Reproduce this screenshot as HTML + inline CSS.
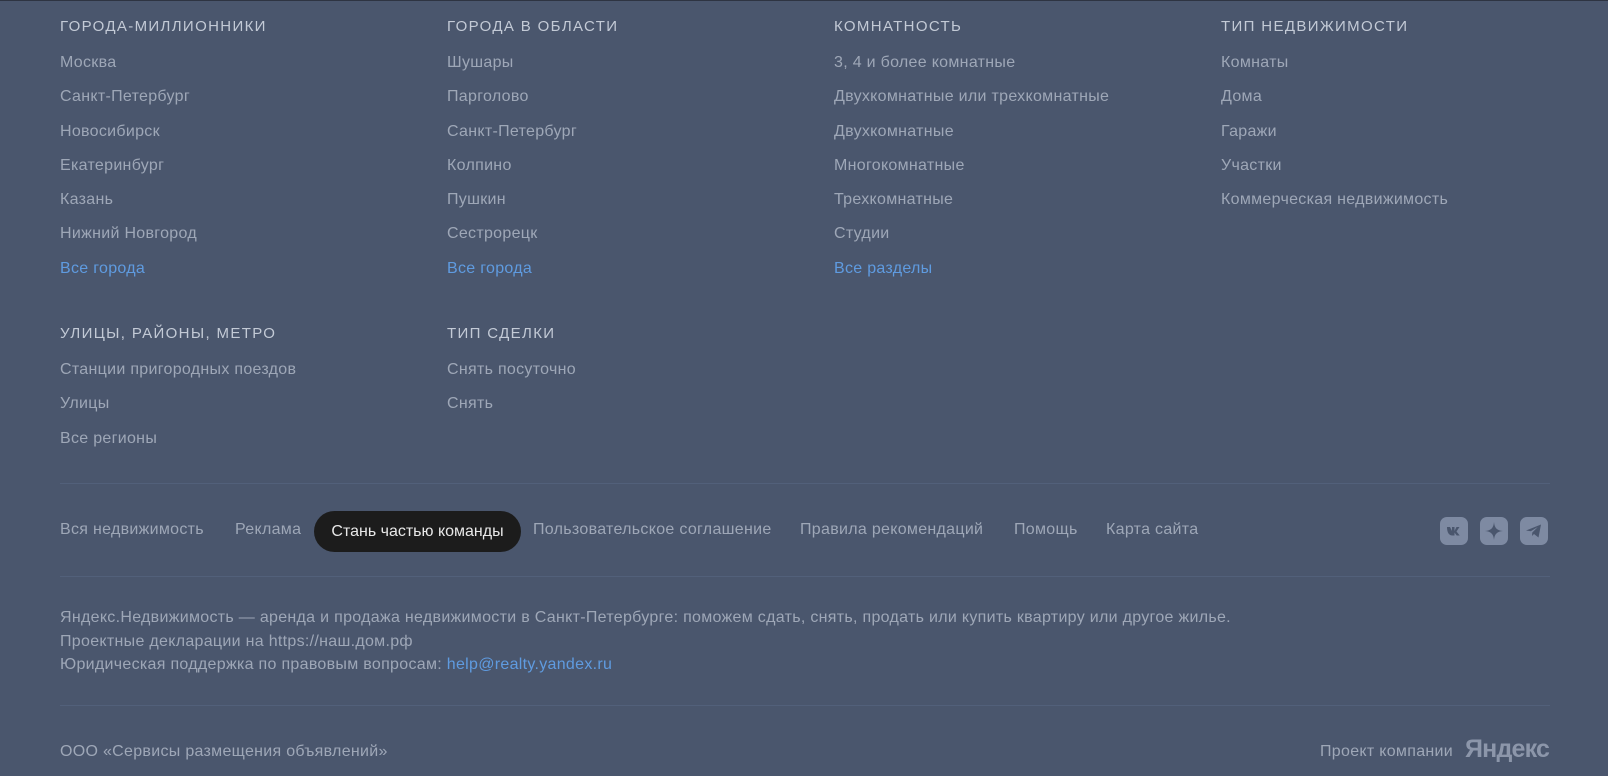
<!DOCTYPE html>
<html><head><meta charset="utf-8"><style>
body{margin:0;width:1608px;height:776px;background:#4a566d;font-family:"Liberation Sans",sans-serif;color:#9ea7b7;border-top:1px solid #2e3442;box-sizing:border-box;overflow:hidden;position:relative}
.a{position:absolute;white-space:nowrap}
.h{font-size:15px;letter-spacing:1.35px;color:#c3cad6;text-transform:uppercase}
.l{font-size:16px;letter-spacing:0.3px}
.b{color:#5f9be0}
.sep{position:absolute;left:60px;width:1490px;height:1px;background:#52607a}
.ic{position:absolute;top:516px;width:28px;height:28px;border-radius:7px;background:#7e8aa2}
</style></head><body>
<div class="a h" style="left:60px;top:17px">Города-миллионники</div>
<div class="a h" style="left:447px;top:17px">Города в области</div>
<div class="a h" style="left:834px;top:17px">Комнатность</div>
<div class="a h" style="left:1221px;top:17px">Тип недвижимости</div>
<div class="a l" style="left:60px;top:45px;line-height:34.3px">Москва<br>Санкт-Петербург<br>Новосибирск<br>Екатеринбург<br>Казань<br>Нижний Новгород<br><span class="b">Все города</span></div>
<div class="a l" style="left:447px;top:45px;line-height:34.3px">Шушары<br>Парголово<br>Санкт-Петербург<br>Колпино<br>Пушкин<br>Сестрорецк<br><span class="b">Все города</span></div>
<div class="a l" style="left:834px;top:45px;line-height:34.3px">3, 4 и более комнатные<br>Двухкомнатные или трехкомнатные<br>Двухкомнатные<br>Многокомнатные<br>Трехкомнатные<br>Студии<br><span class="b">Все разделы</span></div>
<div class="a l" style="left:1221px;top:45px;line-height:34.3px">Комнаты<br>Дома<br>Гаражи<br>Участки<br>Коммерческая недвижимость</div>
<div class="a h" style="left:60px;top:324px">Улицы, районы, метро</div>
<div class="a h" style="left:447px;top:324px">Тип сделки</div>
<div class="a l" style="left:60px;top:352px;line-height:34.3px">Станции пригородных поездов<br>Улицы<br>Все регионы</div>
<div class="a l" style="left:447px;top:352px;line-height:34.3px">Снять посуточно<br>Снять</div>
<div class="sep" style="top:482px"></div>
<div class="a l" style="left:60px;top:520px">Вся недвижимость</div>
<div class="a l" style="left:235px;top:520px">Реклама</div>
<div class="a l" style="left:314px;top:510px;width:207px;height:41px;border-radius:21px;background:#1c1c1c;color:#e8e8e8;line-height:41px;text-align:center;letter-spacing:0">Стань частью команды</div>
<div class="a l" style="left:533px;top:520px">Пользовательское соглашение</div>
<div class="a l" style="left:800px;top:520px">Правила рекомендаций</div>
<div class="a l" style="left:1014px;top:520px">Помощь</div>
<div class="a l" style="left:1106px;top:520px">Карта сайта</div>
<div class="ic" style="left:1440px"><svg width="28" height="28" viewBox="0 0 28 28"><path d="M7 10h3l2 4V10h2.5v4l2-4h3l-3 4.5 3.2 4h-3l-2.2-3v3h-2c-3.5 0-5.5-3-5.5-8.5z" fill="#4a566d"/></svg></div>
<div class="ic" style="left:1480px"><svg width="28" height="28" viewBox="0 0 28 28"><path d="M14 5C14.5 11 17 13.5 23 14 17 14.5 14.5 17 14 23 13.5 17 11 14.5 5 14 11 13.5 13.5 11 14 5z" fill="#4a566d"/></svg></div>
<div class="ic" style="left:1520px"><svg width="28" height="28" viewBox="0 0 28 28"><path d="M6 13.5l15-6-2.5 13-4.5-3.5-2 2 .3-3.5 5.5-5.5-7 4.3z" fill="#4a566d"/></svg></div>
<div class="sep" style="top:575px"></div>
<div class="a l" style="left:60px;top:605px;line-height:23.5px">Яндекс.Недвижимость — аренда и продажа недвижимости в Санкт-Петербурге: поможем сдать, снять, продать или купить квартиру или другое жилье.<br>Проектные декларации на https://наш.дом.рф<br>Юридическая поддержка по правовым вопросам: <span class="b">help@realty.yandex.ru</span></div>
<div class="sep" style="top:704px"></div>
<div class="a l" style="left:60px;top:742px">ООО «Сервисы размещения объявлений»</div>
<div class="a l" style="left:1320px;top:742px">Проект компании</div>
<div class="a" style="left:1465px;top:734px;font-size:25px;font-weight:bold;color:#8c96aa;letter-spacing:-0.8px">Яндекс</div>
</body></html>
